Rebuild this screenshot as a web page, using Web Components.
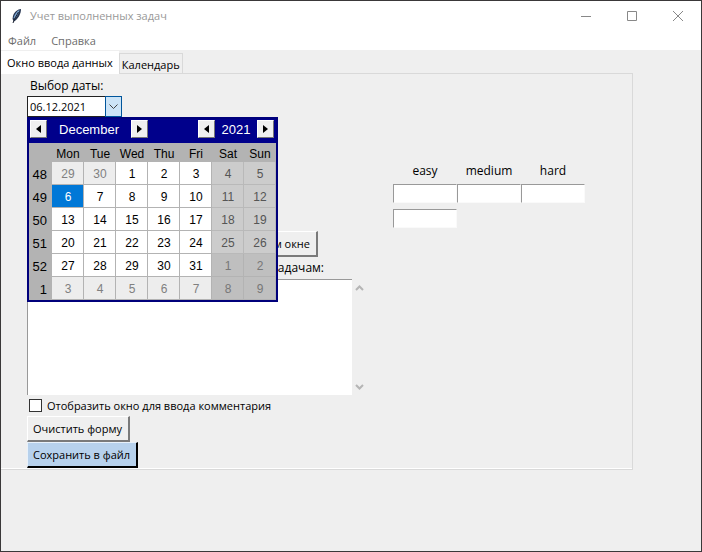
<!DOCTYPE html>
<html lang="ru">
<head>
<meta charset="utf-8">
<title>Учет выполненных задач</title>
<style>
  html, body { margin: 0; height: 100%; }
  body { display: flex; background: #efefef; color: #000; font: 11px/16px "Open Sans", "Noto Sans", sans-serif; }
</style>
</head>
<body>
<task-window></task-window>

<script>
const define = (name, html, setup) => {
  const template = document.createElement('template');
  template.innerHTML = '<style>*{box-sizing:border-box}button,input,textarea{font:inherit;color:inherit;margin:0;border-radius:0}</style>' + html;
  customElements.define(name, class extends HTMLElement {
    constructor() {
      super();
      this.attachShadow({ mode: 'open' }).append(template.content.cloneNode(true));
    }
    connectedCallback() { if (setup) setup(this.shadowRoot, this); }
  });
};

define('title-bar', `
<style>
  :host { display: flex; align-items: center; height: 30px; background: #fff; color: #999; }
  .logo { margin: 0 7px 0 9px; flex: none; }
  h1 { flex: 1; margin: 0; font: inherit; white-space: nowrap; }
  button { width: 46px; height: 30px; padding: 0; border: 0; background: none; display: grid; place-items: center; }
</style>
<svg class="logo" width="13" height="18" viewBox="0 0 13 18" aria-hidden="true">
  <path d="M11 2C8 2 4 5 3 9L2.500 12L4 14.500C8 12 11 7 11 2Z" fill="#25344f"/>
  <path d="M9.500 3C7 4 4.500 7 3.500 11L4.500 12C7 9.500 9 6 9.500 3Z" fill="#7ba5d2"/>
  <path d="M8.500 5L4.500 12L3 16" fill="none" stroke="#1c2433"/>
</svg>
<h1><slot></slot></h1>
<button aria-label="Свернуть"><svg width="10" height="10"><path d="M0 5.5H10" stroke="#888"/></svg></button>
<button aria-label="Развернуть"><svg width="10" height="10"><path d="M.5 .5H9.5V9.5H.5Z" fill="none" stroke="#888"/></svg></button>
<button aria-label="Закрыть"><svg width="10" height="10"><path d="M0 0L10 10M10 0L0 10" stroke="#888"/></svg></button>`);

define('menu-bar', `
<style>
  :host { display: flex; height: 19px; background: #fff; color: #6d6d6d; padding-left: 1px; }
  button { border: 0; background: none; padding: 0 6px; margin-right: 3px; line-height: 20px; }
</style>
<button>Файл</button><button>Справка</button>`);

define('tab-strip', `
<style>
  :host { display: flex; align-items: flex-end; height: 24px; margin-bottom: -1px; position: relative; }
  button { background: #efefef; border: 1px solid #d9d9d9; padding: 2px 2px 0; height: 21px; line-height: 16px; white-space: nowrap; }
  button[aria-selected=true] { background: #fff; border-color: #fff; height: 23px; padding: 0 5px; }
  div { display: contents; }
</style>
<div role="tablist"><button role="tab" aria-selected="true">Окно ввода данных</button><button role="tab" aria-selected="false">Календарь</button></div>`);

define('raised-button', `
<style>
  :host { display: block; }
  button { display: block; height: 26px; padding: 0 6px 0 5px; background: #efefef; border: 1px solid; border-width: 1px 2px 2px 1px; border-color: #fff #7a7a7a #7a7a7a #fff; white-space: nowrap; }
  :host([primary]) button { background: #b7d1ec; border-color: #e8f1fa #000 #000 #e8f1fa; }
</style>
<button><slot></slot></button>`);

define('month-calendar', `
<style>
  :host { display: block; width: 251px; border: 2px solid #00007b; background: #b3b3b3; font: 13px/16px "Liberation Sans", Arial, sans-serif; }
  header { display: flex; align-items: center; height: 24px; background: #00008b; color: #fff; padding: 0 2px 4px 1px; }
  header span { text-align: center; padding-top: 2px; }
  .month { width: 84px; }
  .year { flex: 1; }
  .gap { width: 50px; }
  button { display: grid; place-items: center; width: 17px; height: 18px; padding: 0; background: #f0f0f0; border: 1px solid; border-color: #fff #777 #777 #fff; }
  table { width: 100%; border-collapse: collapse; table-layout: fixed; }
  th, td { padding: 0; text-align: center; font-weight: normal; }
  thead th { height: 19px; padding-top: 2px; font-size: 12px; }
  tbody th { height: 23px; text-align: right; padding: 2px 5px 0 0; }
  .week { width: 23px; }
  td { background: #fff; box-shadow: inset -1px -1px #b3b3b3; font-size: 12px; }
  td:nth-child(n+7) { background: #cccccc; color: #555; box-shadow: inset -1px -1px #b9b9b9; }
  td.other { background: #ededed; color: #808080; }
  td.other:nth-child(n+7) { background: #bfbfbf; color: #777; box-shadow: inset -1px -1px #b3b3b3; }
  td.chosen { background: #0078d7; color: #fff; }
</style>
<header>
  <button aria-label="Previous month"><svg width="5" height="8"><path d="M5 0V8L0 4Z"/></svg></button>
  <span class="month">December</span>
  <button aria-label="Next month"><svg width="5" height="8"><path d="M0 0V8L5 4Z"/></svg></button>
  <span class="gap"></span>
  <button aria-label="Previous year"><svg width="5" height="8"><path d="M5 0V8L0 4Z"/></svg></button>
  <span class="year">2021</span>
  <button aria-label="Next year"><svg width="5" height="8"><path d="M0 0V8L5 4Z"/></svg></button>
</header>
<table>
  <thead><tr><th class="week"></th><th>Mon</th><th>Tue</th><th>Wed</th><th>Thu</th><th>Fri</th><th>Sat</th><th>Sun</th></tr></thead>
  <tbody></tbody>
</table>`, root => {
  const body = root.querySelector('tbody');
  [48, 49, 50, 51, 52, 1].forEach((week, w) => {
    const row = body.insertRow();
    const head = document.createElement('th');
    head.scope = 'row';
    head.textContent = week;
    row.append(head);
    for (let d = 0; d < 7; d++) {
      const date = new Date(2021, 10, 29 + w * 7 + d);
      const cell = row.insertCell();
      cell.textContent = date.getDate();
      if (date.getMonth() !== 11) cell.className = 'other';
      else if (date.getDate() === 6) cell.className = 'chosen';
    }
  });
});

define('date-picker', `
<style>
  :host { display: block; position: relative; width: 95px; }
  label { display: block; font-size: 12px; height: 20px; line-height: 18px; padding: 1px 0 0 3px; white-space: nowrap; }
  .field { display: flex; height: 21px; }
  input { flex: 1; min-width: 0; border: 1px solid #222; border-width: 1px 0 1px 1px; padding: 0 2px; background: #fff; outline: 0; }
  button { width: 17px; padding: 0; border: 1px solid #00559b; background: #cce4f7; display: grid; place-items: center; }
  month-calendar { position: absolute; top: 100%; left: 0; z-index: 2; }
</style>
<label for="date">Выбор даты:</label>
<div class="field"><input id="date" value="06.12.2021"><button aria-label="Открыть календарь"><svg width="9" height="6"><path d="M.5 .5L4.500 4.500L8.500 .5" fill="none" stroke="#444"/></svg></button></div>
<month-calendar></month-calendar>`);

define('task-notes', `
<style>
  :host { display: block; }
  label { display: block; height: 20px; line-height: 18px; font-size: 12px; padding: 0 43px 0 0; text-align: right; }
  .box { display: flex; height: 116px; }
  textarea { flex: 1; min-width: 0; resize: none; border: 0; border-top: 1px solid #999; border-left: 1px solid #999; background: #fff; outline: 0; overflow: hidden; }
  .scroll { width: 15px; display: flex; flex-direction: column; justify-content: space-between; align-items: center; padding: 6px 0 5px; }
</style>
<label for="notes"><slot></slot></label>
<div class="box"><textarea id="notes"></textarea>
<div class="scroll"><svg width="9" height="6"><path d="M1 5L4.500 1.500L8 5" fill="none" stroke="#b5b5b5" stroke-width="2"/></svg><svg width="9" height="6"><path d="M1 1L4.500 4.500L8 1" fill="none" stroke="#b5b5b5" stroke-width="2"/></svg></div></div>`);

define('check-option', `
<style>
  :host { display: block; }
  label { display: flex; align-items: center; height: 21px; white-space: nowrap; }
  input { appearance: none; width: 13px; height: 13px; border: 1px solid #333; background: #fff; margin: 0 5px 0 2px; }
</style>
<label><input type="checkbox"><slot></slot></label>`);

define('level-grid', `
<style>
  :host { display: grid; grid-template-columns: repeat(3, 64px); align-content: start; row-gap: 6px; }
  label { text-align: center; height: 15px; font-size: 12px; }
  input { width: 100%; height: 19px; border: 1px solid; border-color: #999 #fafafa #fafafa #999; background: #fff; outline: 0; }
</style>
<label for="easy">easy</label><label for="medium">medium</label><label for="hard">hard</label>
<input id="easy"><input id="medium"><input id="hard">
<input aria-label="total">`);

define('task-form', `
<style>
  :host { display: flex; gap: 26px; padding: 2px 47px 1px 26px; border: 1px solid #d9d9d9; border-left: 0; box-shadow: inset 0 -1px #fff; margin-right: 68px; }
  .main { flex: 1; min-width: 0; }
  level-grid { margin-top: 87px; }
  .comment { display: flex; justify-content: flex-end; margin: 114px 49px 2px 0; }
</style>
<div class="main">
  <date-picker></date-picker>
  <raised-button class="comment">м окне</raised-button>
  <task-notes>адачам:</task-notes>
  <check-option>Отобразить окно для ввода комментария</check-option>
  <raised-button>Очистить форму</raised-button>
  <raised-button primary>Сохранить в файл</raised-button>
</div>
<level-grid></level-grid>`);

define('task-window', `
<style>
  :host { display: flex; flex-direction: column; flex: 1; min-width: 0; border: 1px solid #3a3839; box-sizing: border-box; }
</style>
<title-bar>Учет выполненных задач</title-bar>
<menu-bar></menu-bar>
<tab-strip></tab-strip>
<task-form></task-form>`);
</script>
</body>
</html>
